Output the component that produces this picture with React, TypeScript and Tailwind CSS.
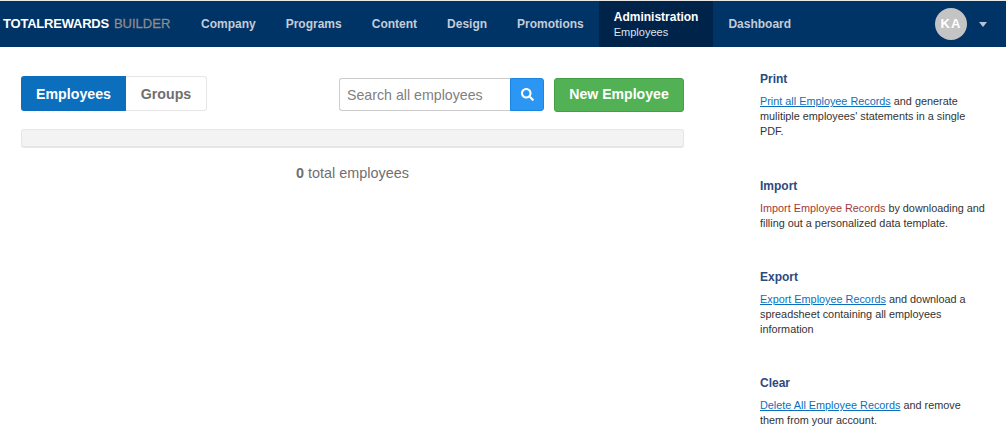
import React from 'react';
import { FaSearch } from 'react-icons/fa';

const navItems = ['Company', 'Programs', 'Content', 'Design', 'Promotions'];

function HelpBlock({ title, link, rest, red, className }: { title: string; link: string; rest: string; red?: boolean; className: string }) {
  return (
    <section className={className}>
      <h3 className="text-[12px] leading-[15px] font-bold text-[#2c4a80]">{title}</h3>
      <p className="mt-[7px] text-[10.85px] leading-[15px] text-[#333333]">
        {red ? (
          <span className="text-[#a03a3a]">{link}</span>
        ) : (
          <a className="text-[#0b6fbd] underline">{link}</a>
        )}{' '}
        {rest}
      </p>
    </section>
  );
}

export default function App() {
  return (
    <div className="h-[443px] w-[1006px] overflow-hidden bg-white font-['Liberation_Sans',Arial,sans-serif]">
      <div className="h-px bg-[#e8e8e8]" />
      <header className="flex h-[46px] items-center bg-[#003366]">
        <div className="ml-[3px] w-[183px] whitespace-nowrap text-[13px] font-bold">
          <span className="tracking-[-0.22px] text-white">TOTALREWARDS</span>
          <span className="ml-[5px] font-normal text-[#8c8c8c] [-webkit-text-stroke:0.3px_#8c8c8c]">BUILDER</span>
        </div>
        <nav className="flex h-full items-center">
          {navItems.map((item) => (
            <a key={item} className="px-[15px] text-[12px] font-bold text-[#c3ccd8]">
              {item}
            </a>
          ))}
          <a className="flex h-full flex-col justify-center bg-[#00234a] px-[15px] pt-px text-white">
            <span className="text-[12px] leading-[15px] font-bold">Administration</span>
            <span className="text-[11px] leading-[15px] text-[#dfe4ea]">Employees</span>
          </a>
          <a className="px-[15px] text-[12px] font-bold text-[#c3ccd8]">Dashboard</a>
        </nav>
        <div className="ml-auto flex items-center">
          <div className="flex h-8 w-8 items-center justify-center rounded-full bg-[#c4c4c4] text-[13px] font-bold tracking-[1px] text-white">
            KA
          </div>
          <span className="mr-[19px] ml-[12px] h-0 w-0 border-x-[4px] border-t-[5px] border-x-transparent border-t-[#b8c4d4]" />
        </div>
      </header>

      <div className="flex">
        <main className="ml-[21px] w-[663px]">
          <div className="mt-[29px] flex items-start">
            <div className="flex h-[35px] text-[14.2px] font-bold">
              <a className="flex w-[105px] items-center justify-center rounded-l-[3px] bg-[#0b6fbd] pt-[2px] text-white">Employees</a>
              <a className="flex w-[81px] items-center justify-center rounded-r-[3px] border border-l-0 border-[#e6e6e6] pt-[2px] text-[#6f6f6f]">Groups</a>
            </div>
            <div className="mt-[2px] ml-auto flex h-[33px]">
              <input
                placeholder="Search all employees"
                className="h-full w-[171px] rounded-l-[3px] border border-r-0 border-[#cccccc] px-[7px] text-[14.2px] outline-none placeholder:text-[#7f7f7f]"
              />
              <button className="flex h-full w-[34px] items-center justify-center rounded-r-[3px] border border-[#1a86e0] bg-[#2b96f3] text-white">
                <FaSearch size={13} />
              </button>
            </div>
            <button className="mt-[2px] ml-[10px] h-[34px] w-[130px] rounded-[3px] border border-[#43a047] bg-[#52b155] text-[14.1px] font-bold text-white">
              New Employee
            </button>
          </div>
          <div className="mt-[17px] h-[19px] rounded-[3px] border border-b-2 border-[#e6e6e6] bg-[#f3f3f3]" />
          <p className="mt-[17px] text-center text-[14.4px] leading-[17px] text-[#6f6f6f]">
            <b>0</b> total employees
          </p>
        </main>

        <aside className="ml-[76px] w-[226px]">
          <HelpBlock className="mt-[25px]" title="Print" link="Print all Employee Records" rest="and generate mulitiple employees' statements in a single PDF." />
          <HelpBlock className="mt-[40px]" title="Import" link="Import Employee Records" rest="by downloading and filling out a personalized data template." red />
          <HelpBlock className="mt-[39px]" title="Export" link="Export Employee Records" rest="and download a spreadsheet containing all employees information" />
          <HelpBlock className="mt-[39px]" title="Clear" link="Delete All Employee Records" rest="and remove them from your account." />
        </aside>
      </div>
    </div>
  );
}
